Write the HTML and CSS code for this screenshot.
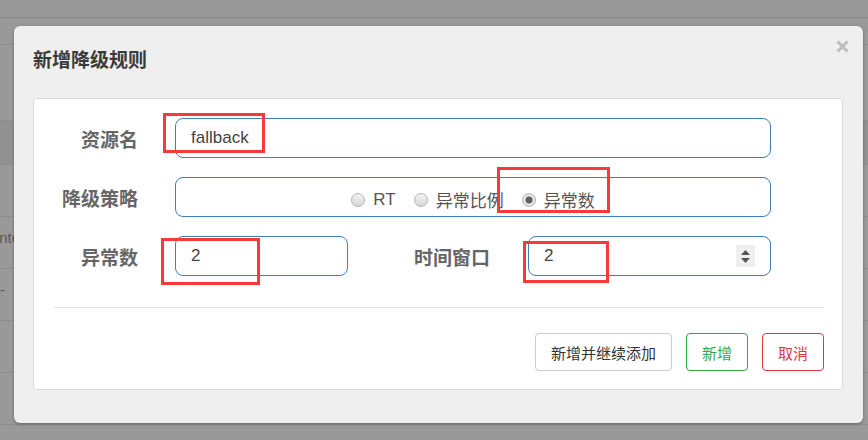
FILE: index.html
```html
<!DOCTYPE html>
<html>
<head>
  <meta charset="utf-8">
  <title>新增降级规则</title>
  <link rel="stylesheet" href="styles.css">
</head>

<body>
  <!-- page behind the overlay -->
  <div class="bg">
    <div class="bg-row top"></div>
    <div class="bg-row h27"></div>
    <div class="bg-row h76"></div>
    <div class="bg-row h44 dark"></div>
    <div class="bg-row h52"></div>
    <div class="bg-row h52"><span class="bg-text">Inte</span></div>
    <div class="bg-row h52"><span class="bg-text">--</span></div>
    <div class="bg-row h52"></div>
    <div class="bg-row h52"></div>
  </div>

  <div class="modal">
    <div class="modal-header">
      <h3 class="modal-title">新增降级规则</h3>
    </div>
    <span class="close">
      <svg width="13" height="13" viewBox="0 0 13 13">
        <path d="M1.5 1.5 L11.5 11.5 M11.5 1.5 L1.5 11.5" stroke="#bdbdbd" stroke-width="3"/>
      </svg>
    </span>

    <div class="panel">
      <div class="form-row">
        <label class="label">资源名</label>
        <div class="field wide">
          <input class="field-input" type="text" value="fallback">
        </div>
      </div>

      <div class="form-row">
        <label class="label">降级策略</label>
        <div class="field wide radios">
          <label class="radio"><input type="radio" name="grade"> RT</label>
          <label class="radio"><input type="radio" name="grade"> 异常比例</label>
          <label class="radio"><input type="radio" name="grade" checked> 异常数</label>
        </div>
      </div>

      <div class="form-row">
        <label class="label">异常数</label>
        <div class="field short">
          <input class="field-input" type="text" value="2">
        </div>
        <label class="label label-mid">时间窗口</label>
        <div class="field window">
          <input class="field-input" type="text" value="2">
          <span class="spinner">
            <svg width="19" height="22" viewBox="0 0 19 22">
              <path d="M5 10 L9.5 5 L14 10 Z" fill="#555"/>
              <path d="M5 13 L14 13 L9.5 18 Z" fill="#555"/>
            </svg>
          </span>
        </div>
      </div>

      <div class="divider"></div>

      <div class="actions">
        <button class="btn">新增并继续添加</button>
        <button class="btn btn-ok">新增</button>
        <button class="btn btn-cancel">取消</button>
      </div>
    </div>
  </div>

  <!-- red annotation boxes -->
  <div class="mark mark-name"></div>
  <div class="mark mark-strategy"></div>
  <div class="mark mark-count"></div>
  <div class="mark mark-window"></div>
</body>
</html>
```

FILE: styles.css
```css
body {
  margin: 0;
  width: 868px;
  height: 440px;
  overflow: hidden;
  position: relative;
  background-color: #999999;
  font-family: "Liberation Sans", "Noto Sans CJK SC", sans-serif;
  color: #444;
}

.bg-row {
  box-sizing: border-box;
  border-bottom: 1px solid #8b8b8b;
  height: 52px;
}

.bg-row.top { height: 18px; border-bottom-color: #878787; }
.bg-row.h27 { height: 27px; }
.bg-row.h76 { height: 76px; }
.bg-row.h44 { height: 44px; }
.bg-row.dark { background-color: #919191; }

.bg-text {
  display: block;
  padding-top: 12px;
  margin-left: -5px;
  font-size: 15px;
  color: #5a5a5a;
}

.modal {
  position: absolute;
  left: 14px;
  top: 26px;
  width: 849px;
  height: 397px;
  box-sizing: border-box;
  background-color: #efefef;
  border-radius: 6px;
  box-shadow: 0 1px 3px rgba(0, 0, 0, 0.35);
}

.modal-header {
  height: 72px;
  box-sizing: border-box;
  padding: 22px 19px 0;
}

.modal-title {
  margin: 0;
  font-family: "Noto Sans CJK SC", sans-serif;
  font-size: 19px;
  line-height: 22px;
  font-weight: bold;
  color: #3a3a3a;
}

.close {
  position: absolute;
  top: 14px;
  right: 14px;
  width: 13px;
  height: 13px;
  display: flex;
}

.panel {
  margin: 0 20px 0 19px;
  height: 292px;
  box-sizing: border-box;
  background-color: #fff;
  border: 1px solid #dcdcdc;
  border-radius: 4px;
  padding: 19px 18px 0 0;
}

.form-row {
  display: flex;
  align-items: center;
  height: 40px;
  margin-bottom: 19px;
}

.form-row:last-of-type {
  margin-bottom: 0;
}

.label {
  width: 104px;
  flex: none;
  text-align: right;
  font-family: "Noto Sans CJK SC", sans-serif;
  font-size: 19px;
  font-weight: bold;
  color: #666;
}

.label-mid {
  width: 142px;
}

.field {
  height: 40px;
  box-sizing: border-box;
  margin-left: 37px;
  border: 1px solid #3f7fbf;
  border-radius: 8px;
  display: flex;
  align-items: center;
  background-color: #fff;
}

.field.wide { width: 596px; }
.field.short { width: 173px; }
.field.window { width: 243px; margin-left: 38px; }

.field-input {
  flex: 1;
  min-width: 0;
  border: none;
  outline: none;
  background: transparent;
  padding: 0 0 0 15px;
  font-family: "Liberation Sans", sans-serif;
  font-size: 17px;
  color: #444;
}

.spinner {
  width: 19px;
  height: 22px;
  margin-right: 15px;
  background-color: #efefef;
  display: flex;
}

.radios {
  justify-content: center;
  gap: 18px;
  padding-top: 5px;
}

.radio {
  display: inline-flex;
  align-items: center;
  gap: 8px;
  font-family: "Liberation Sans", "Noto Sans CJK SC", sans-serif;
  font-size: 17px;
  color: #555;
}

.radio input {
  appearance: none;
  -webkit-appearance: none;
  margin: 0;
  width: 14px;
  height: 14px;
  box-sizing: border-box;
  border: 1px solid #b3b3b3;
  border-radius: 50%;
  background: linear-gradient(#f4f4f4, #d6d6d6);
}

.radio input:checked {
  background: radial-gradient(circle, #5f5f5f 0 3px, #e4e4e4 4px);
}

.divider {
  height: 1px;
  background-color: #e3e3e3;
  margin: 31px 0 0 19px;
}

.actions {
  display: flex;
  justify-content: flex-end;
  gap: 14px;
  margin-top: 25px;
}

.btn {
  height: 38px;
  padding: 0 15px;
  background-color: #fff;
  border: 1px solid #cccccc;
  border-radius: 4px;
  font-family: "Noto Sans CJK SC", sans-serif;
  font-size: 15px;
  color: #333;
  cursor: pointer;
}

.btn-ok {
  border-color: #2fa84a;
  color: #2fa84a;
}

.btn-cancel {
  border-color: #dc3545;
  color: #dc3545;
}

.mark {
  position: absolute;
  box-sizing: border-box;
  border: 3px solid #f83a3a;
}

.mark-name { left: 163px; top: 113px; width: 102px; height: 40px; }
.mark-strategy { left: 497px; top: 167px; width: 113px; height: 46px; }
.mark-count { left: 161px; top: 238px; width: 99px; height: 47px; }
.mark-window { left: 523px; top: 241px; width: 86px; height: 42px; }
```
